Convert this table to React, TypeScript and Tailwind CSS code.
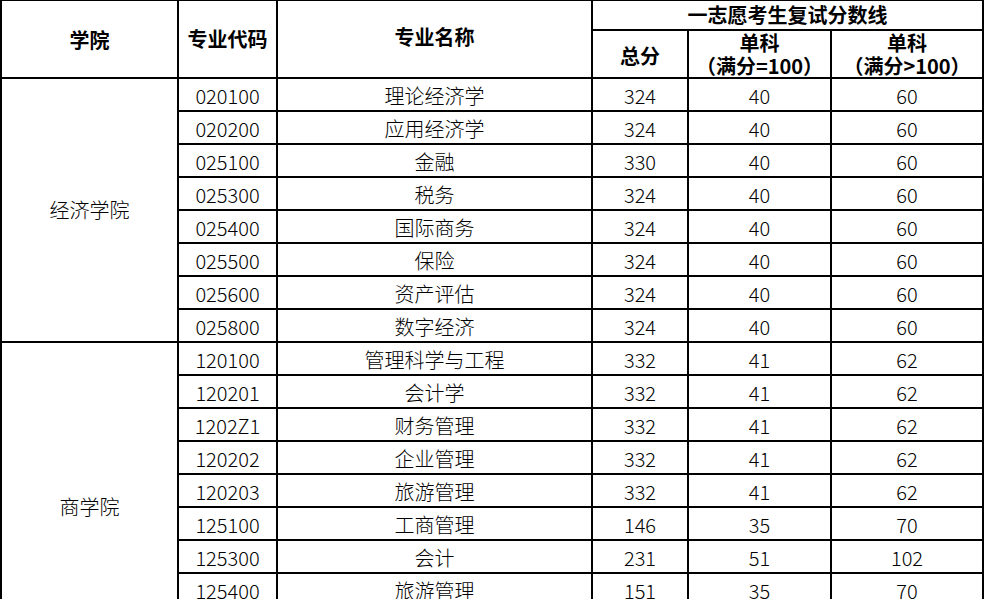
import React from "react";

const econ: [string, string, string, string, string][] = [
  ["020100", "理论经济学", "324", "40", "60"],
  ["020200", "应用经济学", "324", "40", "60"],
  ["025100", "金融", "330", "40", "60"],
  ["025300", "税务", "324", "40", "60"],
  ["025400", "国际商务", "324", "40", "60"],
  ["025500", "保险", "324", "40", "60"],
  ["025600", "资产评估", "324", "40", "60"],
  ["025800", "数字经济", "324", "40", "60"],
];

const biz: [string, string, string, string, string][] = [
  ["120100", "管理科学与工程", "332", "41", "62"],
  ["120201", "会计学", "332", "41", "62"],
  ["1202Z1", "财务管理", "332", "41", "62"],
  ["120202", "企业管理", "332", "41", "62"],
  ["120203", "旅游管理", "332", "41", "62"],
  ["125100", "工商管理", "146", "35", "70"],
  ["125300", "会计", "231", "51", "102"],
  ["125400", "旅游管理", "151", "35", "70"],
  ["", "", "", "", ""],
  ["", "", "", "", ""],
];

const cell = "border-2 border-black text-center align-middle p-0";

function Rows({ name, rows }: { name: string; rows: [string, string, string, string, string][] }) {
  return (
    <>
      {rows.map((r, i) => (
        <tr key={name + i} className="h-[33px]">
          {i === 0 && (
            <td rowSpan={rows.length} className={cell}>
              {name}
            </td>
          )}
          {r.map((v, j) => (
            <td key={j} className={cell + " pt-[2px]"}>
              {v}
            </td>
          ))}
        </tr>
      ))}
    </>
  );
}

export default function App() {
  return (
    <div className="w-[986px] h-[599px] overflow-hidden bg-white">
      <table
        className="-mt-[1px] w-[982px] table-fixed border-collapse text-[20px] leading-[22px] font-light text-black"
        style={{ fontFamily: '"Noto Sans CJK SC", "Noto Sans", sans-serif' }}
      >
        <colgroup>
          <col className="w-[177px]" />
          <col className="w-[99px]" />
          <col className="w-[315px]" />
          <col className="w-[96px]" />
          <col className="w-[143px]" />
          <col className="w-[152px]" />
        </colgroup>
        <thead>
          <tr className="h-[30px]">
            <th rowSpan={2} className={cell + " font-semibold pt-[1px]"}>学院</th>
            <th rowSpan={2} className={cell + " font-semibold"}>专业代码</th>
            <th rowSpan={2} className={cell + " font-semibold pb-[4px]"}>专业名称</th>
            <th colSpan={3} className={cell + " font-semibold"}>一志愿考生复试分数线</th>
          </tr>
          <tr className="h-[47px]">
            <th className={cell + " font-semibold pt-[3px]"}>总分</th>
            <th className={cell + " font-semibold leading-[23px]"}>
              <div>单科</div>
              <div>（满分=100）</div>
            </th>
            <th className={cell + " font-semibold leading-[23px]"}>
              <div>单科</div>
              <div>（满分&gt;100）</div>
            </th>
          </tr>
        </thead>
        <tbody>
          <Rows name="经济学院" rows={econ} />
          <Rows name="商学院" rows={biz} />
        </tbody>
      </table>
    </div>
  );
}
